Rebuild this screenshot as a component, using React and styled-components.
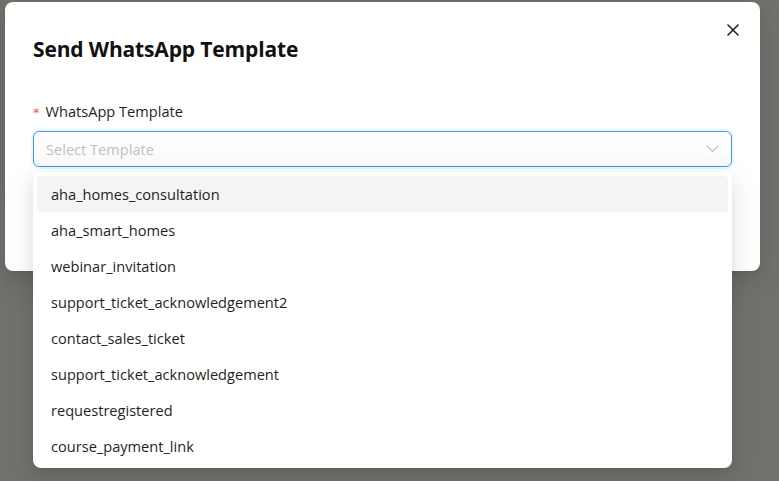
import React from "react";
import styled, { createGlobalStyle } from "styled-components";

const Global = createGlobalStyle`
  html, body { margin: 0; padding: 0; }
  body {
    font-family: "Open Sans", "Noto Sans", sans-serif;
    background: #73716c;
    width: 779px;
    height: 481px;
    overflow: hidden;
  }
`;

const Backdrop = styled.div`
  width: 779px;
  height: 481px;
  background: #73716c;
  padding: 2px 19px 0 5px;
  box-sizing: border-box;
`;

const Modal = styled.div`
  position: relative;
  background: #fff;
  border-radius: 8px;
  height: 269px;
  box-sizing: border-box;
  padding: 31px 28px 0 28px;
  box-shadow: 0 6px 16px rgba(0,0,0,0.08), 0 3px 6px -4px rgba(0,0,0,0.12), 0 9px 28px 8px rgba(0,0,0,0.05);
`;

const Title = styled.h2`
  margin: 0;
  font-family: "Open Sans", sans-serif;
  font-weight: 700;
  font-size: 21px;
  line-height: 32px;
  color: #111;
  letter-spacing: -0.15px;
`;

const Close = styled.button`
  position: absolute;
  top: 16px;
  right: 15px;
  width: 24px;
  height: 24px;
  border: 0;
  background: transparent;
  padding: 0;
  display: flex;
  align-items: center;
  justify-content: center;
  cursor: pointer;
`;

const Field = styled.div`
  margin-top: 35px;
  position: relative;
`;

const Label = styled.label`
  display: flex;
  align-items: center;
  gap: 6px;
  font-size: 14.6px;
  line-height: 22px;
  color: #1f1f1f;
  height: 22px;
`;

const Star = styled.span`
  color: #ff4d4f;
  font-family: "DejaVu Sans", sans-serif;
  font-size: 13px;
  line-height: 1;
  margin-top: 2px;
`;

const Select = styled.div`
  margin-top: 9px;
  height: 36px;
  box-sizing: border-box;
  border: 1px solid #4096ff;
  border-radius: 6px;
  background: linear-gradient(#fff, #fafafa);
  box-shadow: 0 0 0 2px rgba(5, 145, 255, 0.08);
  display: flex;
  align-items: center;
  justify-content: space-between;
  padding: 0 12px;
`;

const Placeholder = styled.span`
  font-size: 14.6px;
  color: #bfbfbf;
`;

const Dropdown = styled.ul`
  position: absolute;
  left: 0;
  right: 0;
  top: 72px;
  margin: 0;
  padding: 4px;
  list-style: none;
  background: #fff;
  border-radius: 8px;
  box-shadow: 0 6px 16px rgba(0,0,0,0.08), 0 3px 6px -4px rgba(0,0,0,0.12), 0 9px 28px 8px rgba(0,0,0,0.05);
  z-index: 2;
`;

const Option = styled.li`
  height: 36px;
  display: flex;
  align-items: center;
  padding: 0 14px;
  border-radius: 4px;
  font-size: 14.6px;
  color: #1f1f1f;
  background: ${(p) => (p.$active ? "#f4f4f4" : "transparent")};
`;

const options = [
  "aha_homes_consultation",
  "aha_smart_homes",
  "webinar_invitation",
  "support_ticket_acknowledgement2",
  "contact_sales_ticket",
  "support_ticket_acknowledgement",
  "requestregistered",
  "course_payment_link",
];

export default function App() {
  return (
    <>
      <Global />
      <Backdrop>
        <Modal>
          <Close aria-label="close">
            <svg width="12" height="12" viewBox="0 0 12 12">
              <path d="M1 1L11 11M11 1L1 11" stroke="#222" strokeWidth="1.6" strokeLinecap="round" />
            </svg>
          </Close>
          <Title>Send WhatsApp Template</Title>
          <Field>
            <Label>
              <Star>*</Star>
              WhatsApp Template
            </Label>
            <Select>
              <Placeholder>Select Template</Placeholder>
              <svg width="13" height="8" viewBox="0 0 13 8">
                <path d="M1 1L6.5 6.5L12 1" stroke="#bfbfbf" strokeWidth="1.2" fill="none" />
              </svg>
            </Select>
            <Dropdown>
              {options.map((o, i) => (
                <Option key={o} $active={i === 0}>{o}</Option>
              ))}
            </Dropdown>
          </Field>
        </Modal>
      </Backdrop>
    </>
  );
}
